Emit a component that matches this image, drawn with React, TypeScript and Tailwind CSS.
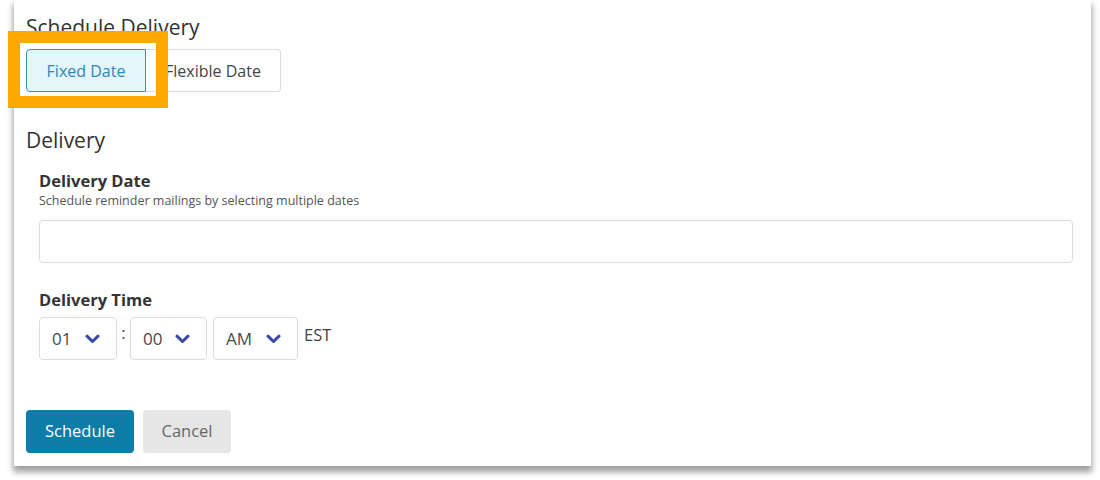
import React from 'react';

const font = { fontFamily: '"Open Sans", "Liberation Sans", sans-serif' };

const Chevron = () => (
  <svg width="15" height="10" viewBox="0 0 15 10" className="text-[#3949ab]">
    <path d="M2 2.2 L7.5 7.5 L13 2.2" fill="none" stroke="currentColor" strokeWidth="3" strokeLinecap="round" strokeLinejoin="round" />
  </svg>
);

const TimeSelect: React.FC<{ value: string; width: string }> = ({ value, width }) => (
  <div className={`${width} h-[43px] flex items-center justify-between pl-[12px] pr-[16px] border border-[#dcdcdc] rounded-[4px] bg-white text-[17px] text-[#4a4a4a]`}>
    <span>{value}</span>
    <Chevron />
  </div>
);

export default function App() {
  return (
    <div className="relative w-[1100px] h-[480px] bg-white overflow-hidden" style={font}>
      <div className="ml-[14px] w-[1077px] bg-white pt-[15px] pb-[13px] shadow-[0_5px_6px_1px_rgba(0,0,0,0.38)]">
        <div className="pl-[12px]">
          <h2 className="text-[21px] leading-[24px] text-[#333]">Schedule Delivery</h2>

          <div className="mt-[10px] flex">
            <button className="w-[120px] h-[43px] rounded-l-[4px] border border-[#3d8fb8] bg-[#e4f5fc] text-[16px] text-[#2f86b0]">
              Fixed Date
            </button>
            <button className="w-[135px] h-[43px] rounded-r-[4px] border border-l-0 border-[#dcdcdc] bg-white text-[16px] text-[#444]">
              Flexible Date
            </button>
          </div>

          <h3 className="mt-[36px] text-[21px] leading-[24px] text-[#333]">Delivery</h3>
        </div>

        <div className="pl-[25px] pr-[18px]">
          <p className="mt-[19px] text-[16.5px] leading-[20px] font-bold text-[#333]">Delivery Date</p>
          <p className="mt-[2px] text-[12.5px] leading-[16px] text-[#555]">Schedule reminder mailings by selecting multiple dates</p>
          <div className="mt-[11px] h-[43px] border border-[#dcdcdc] rounded-[4px]" />

          <p className="mt-[27px] text-[16.5px] leading-[20px] font-bold text-[#333]">Delivery Time</p>
          <div className="mt-[7px] flex items-start">
            <TimeSelect value="01" width="w-[78px]" />
            <span className="w-[13px] pt-[6px] text-center text-[17px] leading-[20px] text-[#444]">:</span>
            <TimeSelect value="00" width="w-[77px]" />
            <div className="w-[6px]" />
            <TimeSelect value="AM" width="w-[85px]" />
            <span className="ml-[6px] pt-[8px] text-[16.5px] leading-[20px] text-[#444]">EST</span>
          </div>
        </div>

        <div className="pl-[12px] mt-[50px] flex gap-[9px]">
          <button className="w-[108px] h-[43px] rounded-[4px] bg-[#0b7da8] text-[16.5px] text-white">Schedule</button>
          <button className="w-[88px] h-[43px] rounded-[4px] bg-[#e6e6e6] text-[16.5px] text-[#666]">Cancel</button>
        </div>
      </div>

      <div className="absolute left-[8px] top-[31px] w-[160px] h-[77px] border-[12px] border-[#ffa800]" />
    </div>
  );
}
